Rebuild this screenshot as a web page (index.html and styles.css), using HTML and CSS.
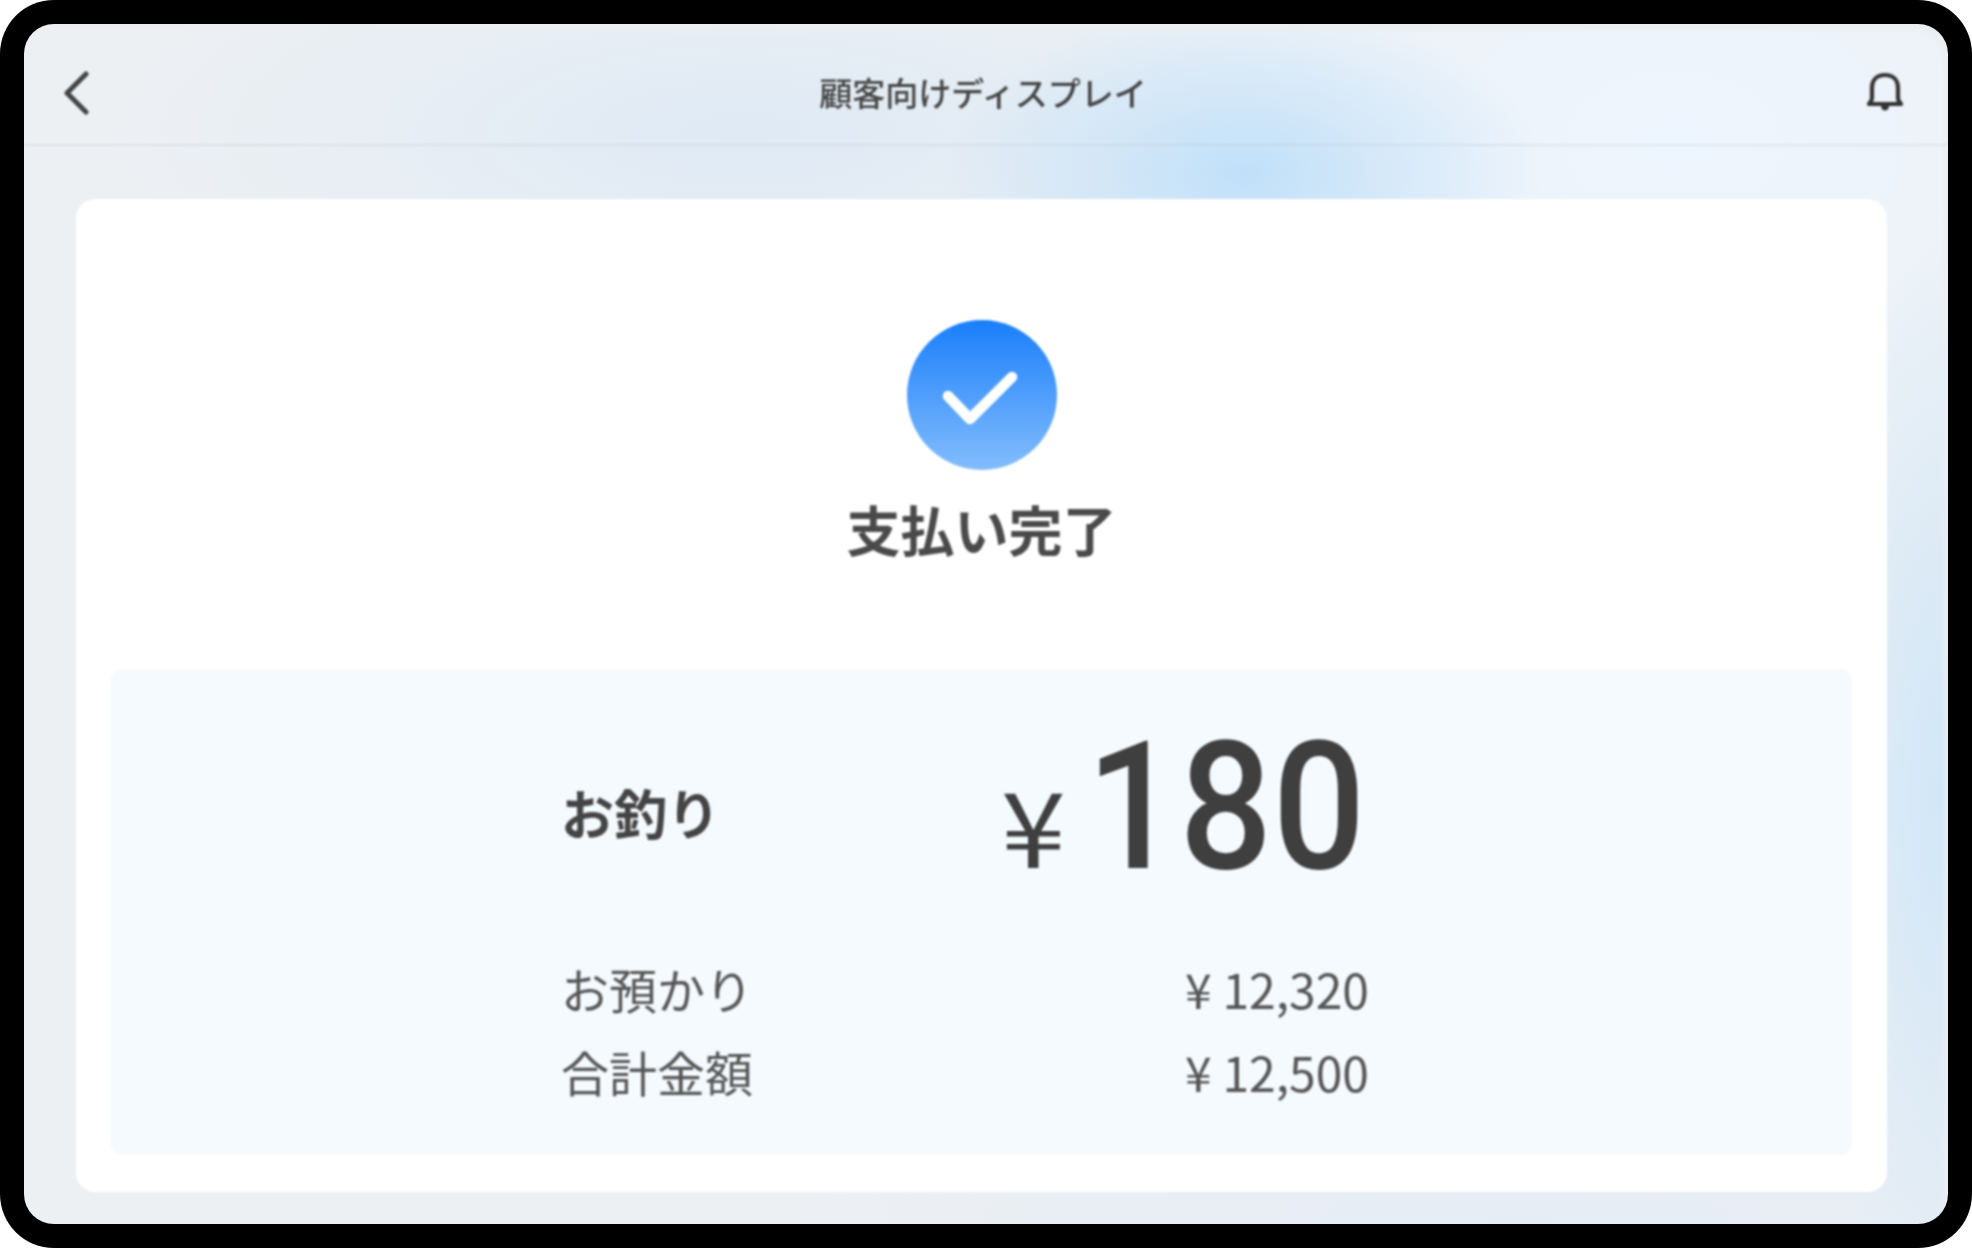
FILE: index.html
```html
<!DOCTYPE html>
<html lang="ja">
<head>
    <meta charset="UTF-8">
    <meta name="viewport" content="width=device-width, initial-scale=1.0">
    <link rel="stylesheet" href="styles.css">
</head>
<body>

<div class="device">
    <div class="screen">
        <header class="top-bar">
            <svg class="icon-back" width="26" height="44" viewBox="0 0 26 44">
                <path d="M23 3 L4 22 L23 41" fill="none" stroke="#444" stroke-width="5" stroke-linecap="round" stroke-linejoin="round"/>
            </svg>
            <div class="top-title">顧客向けディスプレイ</div>
            <svg class="icon-bell" width="36" height="42" viewBox="0 0 36 42">
                <path d="M18 3 C10 3 5 8 5 16 V26 C5 28 4 30 2 32 H34 C32 30 31 28 31 26 V16 C31 8 26 3 18 3 Z" fill="none" stroke="#333" stroke-width="4.2" stroke-linejoin="round"/>
                <path d="M14 34 C14 40 22 40 22 34 Z" fill="#333"/>
            </svg>
        </header>

        <main class="content">
            <section class="card">
                <div class="result">
                    <svg class="icon-check" width="150" height="150" viewBox="0 0 150 150">
                        <defs>
                            <linearGradient id="check-fill" x1="0" y1="0" x2="0" y2="1">
                                <stop offset="0" stop-color="#1a7ffb"/>
                                <stop offset="1" stop-color="#83bdfd"/>
                            </linearGradient>
                        </defs>
                        <circle cx="75" cy="75" r="75" fill="url(#check-fill)"/>
                        <path d="M41 76 L63 99 L105 57" fill="none" stroke="#fff" stroke-width="10.5" stroke-linecap="round" stroke-linejoin="round"/>
                    </svg>
                    <h1 class="result-title">支払い完了</h1>
                </div>

                <div class="panel">
                    <div class="row row-change">
                        <span class="change-label">お釣り</span>
                        <span class="change-amount">
                            <span class="change-yen">¥</span>
                            <span class="change-num">180</span>
                        </span>
                    </div>
                    <div class="row">
                        <span>お預かり</span>
                        <span>¥ 12,320</span>
                    </div>
                    <div class="row">
                        <span>合計金額</span>
                        <span>¥ 12,500</span>
                    </div>
                </div>
            </section>
        </main>
    </div>
</div>

</body>
</html>
```

FILE: styles.css
```css
* {
    box-sizing: border-box;
}

body {
    margin: 0;
    background-color: #fff;
    font-family: "Noto Sans CJK JP", "Noto Sans", sans-serif;
    color: #444;
}

.device {
    width: 1972px;
    height: 1248px;
    padding: 24px;
    background-color: #000;
    border-radius: 54px;
}

.screen {
    display: flex;
    flex-direction: column;
    height: 1200px;
    border-radius: 30px;
    overflow: hidden;
    box-shadow: inset -5px 8px 5px -2px #eceef0;
    background-color: #edf0f3;
    background-image:
        radial-gradient(ellipse 300px 170px at 1220px 150px, #c0e0f9 0%, rgba(192, 224, 249, 0) 100%),
        radial-gradient(ellipse 170px 560px at 1930px 770px, #cfe6f8 0%, rgba(207, 230, 248, 0) 100%),
        radial-gradient(ellipse 620px 420px at 1650px 120px, #edf5fe 0%, rgba(237, 245, 254, 0) 100%),
        radial-gradient(ellipse 640px 220px at 720px 110px, #dfeaf5 0%, rgba(223, 234, 245, 0) 100%),
        radial-gradient(ellipse 760px 220px at 1500px 1200px, #e5ecf5 0%, rgba(229, 236, 245, 0) 100%);
}

.top-bar {
    display: flex;
    align-items: center;
    justify-content: space-between;
    flex: none;
    height: 122px;
    padding: 18px 45px 0 39px;
    border-bottom: 2px solid rgba(190, 200, 212, 0.3);
    filter: blur(0.8px);
}

.top-title {
    font-size: 33px;
    font-weight: 500;
    line-height: 50px;
    color: #444;
    margin: 0 0 2px 10px;
}

.content {
    flex: 1;
    padding: 53px 61px 32px 52px;
}

.card {
    display: flex;
    flex-direction: column;
    height: 100%;
    padding: 0 35px 37px;
    background-color: #fff;
    border-radius: 20px;
    filter: blur(0.8px);
}

.result {
    display: flex;
    flex-direction: column;
    align-items: center;
    flex: none;
    height: 470px;
    padding-top: 121px;
}

.result-title {
    margin: 23px 0 0;
    font-size: 54px;
    line-height: 72px;
    font-weight: 700;
    color: #4a4a4a;
}

.panel {
    flex: 1;
    padding: 0 483px 0 450px;
    background-color: #f5faff;
    border-radius: 10px;
}

.row {
    display: flex;
    align-items: center;
    justify-content: space-between;
    height: 83px;
    font-size: 48px;
    color: #555;
}

.row-change {
    height: 277px;
    padding-top: 8px;
}

.change-label {
    font-size: 53px;
    font-weight: 700;
    color: #444;
}

.change-amount {
    display: flex;
    align-items: baseline;
    margin-bottom: 10px;
    color: #3f3f3f;
}

.change-yen {
    font-size: 104px;
    line-height: 1;
    margin-right: -3px;
    transform: scaleX(1.12);
    transform-origin: right center;
}

.change-num {
    font-family: Roboto, sans-serif;
    font-size: 178px;
    font-weight: 500;
    line-height: 1;
    margin-right: 3px;
    transform: scaleX(0.92);
    transform-origin: right center;
}
```
